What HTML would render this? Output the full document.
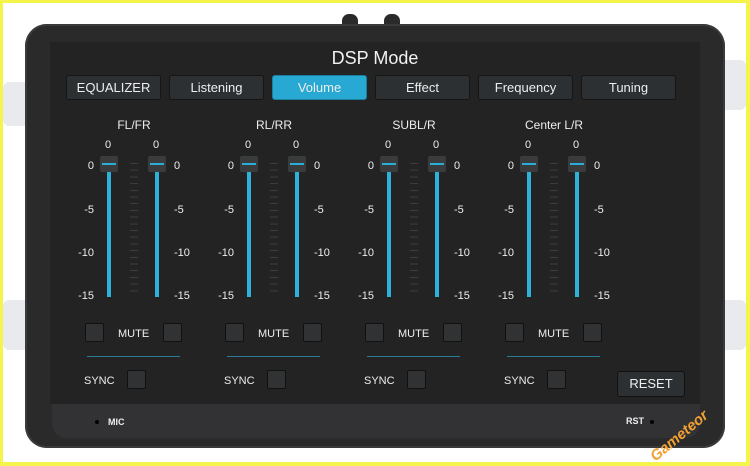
<!DOCTYPE html>
<html><head><style>
*{margin:0;padding:0;box-sizing:border-box}
body{width:750px;height:466px;background:#f4f44a;position:relative;overflow:hidden;font-family:"Liberation Sans",sans-serif;color:#eee}
.a{position:absolute}
.frame{left:3px;top:3px;width:743px;height:459px;background:#fff}
.dev{left:25px;top:24px;width:700px;height:424px;background:#2a2a2b;border-radius:22px;box-shadow:inset 0 0 0 2px #3a3a3c}
.scr{left:50px;top:42px;width:650px;height:362px;background:#232323}
.bez{left:52px;top:404px;width:648px;height:34px;background:#323234;border-radius:0 0 14px 14px}
.brk{background:#e8eaee;border-radius:6px}
.tab{top:75px;width:95px;height:25px;background:#2c3032;border:1px solid #151515;border-radius:3px;font-size:13px;text-align:center;line-height:23px;color:#eee}
.g{top:0;width:140px;height:466px}
.t{font-size:12px;text-align:center;width:100px;left:24px}
.n{font-size:11px}
.knob{width:18px;height:16px;background:#3a3b3c;border-radius:2px}
.knob:after{content:"";position:absolute;left:2px;right:2px;top:7px;height:2px;background:#2aaed6}
.trk{width:4px;background:#2eb2da}
.box{width:19px;height:19px;background:#303234;border:1px solid #111;border-radius:2px}
</style></head><body>
<div class="a frame"></div>
<div class="a brk" style="left:3px;top:82px;width:30px;height:44px"></div>
<div class="a brk" style="left:3px;top:300px;width:30px;height:50px"></div>
<div class="a brk" style="left:718px;top:60px;width:28px;height:50px"></div>
<div class="a brk" style="left:718px;top:300px;width:28px;height:50px"></div>
<div class="a" style="left:342px;top:14px;width:16px;height:14px;background:#2a2a2b;border-radius:7px 7px 0 0"></div>
<div class="a" style="left:384px;top:14px;width:16px;height:14px;background:#2a2a2b;border-radius:7px 7px 0 0"></div>
<div class="a dev"></div>
<div class="a scr"></div>
<div class="a bez"></div>
<div class="a" style="left:95px;top:420px;width:4px;height:4px;border-radius:2px;background:#000"></div>
<div class="a" style="left:108px;top:417px;font-size:9px;font-weight:bold">MIC</div>
<div class="a" style="left:626px;top:416px;font-size:9px;font-weight:bold">RST</div>
<div class="a" style="left:650px;top:420px;width:4px;height:4px;border-radius:2px;background:#000"></div>
<div class="a" style="left:658px;top:448px;font-size:15px;font-style:italic;font-weight:bold;color:#f0a030;transform:rotate(-40deg);transform-origin:left bottom">Gameteor</div>
<div class="a" style="left:0;width:750px;top:48px;text-align:center;font-size:18px;color:#f2f2f2">DSP Mode</div>
<div class="a tab" style="left:66px">EQUALIZER</div>
<div class="a tab" style="left:169px">Listening</div>
<div class="a tab" style="left:272px;background:#27a9d4;border-color:#1b7fa0">Volume</div>
<div class="a tab" style="left:375px">Effect</div>
<div class="a tab" style="left:478px">Frequency</div>
<div class="a tab" style="left:581px">Tuning</div>

<div class="a g" style="left:60px">
<div class="a t" style="top:118px">FL/FR</div>
<div class="a n" style="left:45px;top:139px">0</div><div class="a n" style="left:93px;top:139px">0</div>
<div class="a knob" style="left:40px;top:156px"></div><div class="a knob" style="left:88px;top:156px"></div>
<div class="a trk" style="left:47px;top:172px;height:125px"></div><div class="a trk" style="left:95px;top:172px;height:125px"></div>
<div class="a" style="left:70px;top:163px;width:8px;height:134px;background:repeating-linear-gradient(#3d3d3d 0 1px,transparent 1px 6.7px)"></div>
<div class="a n" style="left:0;width:34px;text-align:right;top:160px">0</div>
<div class="a n" style="left:0;width:34px;text-align:right;top:204px">-5</div>
<div class="a n" style="left:0;width:34px;text-align:right;top:247px">-10</div>
<div class="a n" style="left:0;width:34px;text-align:right;top:290px">-15</div>
<div class="a n" style="left:114px;top:160px">0</div><div class="a n" style="left:114px;top:204px">-5</div><div class="a n" style="left:114px;top:247px">-10</div><div class="a n" style="left:114px;top:290px">-15</div>
<div class="a box" style="left:25px;top:323px"></div><div class="a box" style="left:103px;top:323px"></div>
<div class="a n" style="left:58px;top:328px">MUTE</div>
<div class="a" style="left:27px;top:356px;width:93px;height:1px;background:#2a7c96"></div>
<div class="a n" style="left:24px;top:375px">SYNC</div>
<div class="a box" style="left:67px;top:370px"></div>
</div>

<div class="a g" style="left:200px">
<div class="a t" style="top:118px">RL/RR</div>
<div class="a n" style="left:45px;top:139px">0</div><div class="a n" style="left:93px;top:139px">0</div>
<div class="a knob" style="left:40px;top:156px"></div><div class="a knob" style="left:88px;top:156px"></div>
<div class="a trk" style="left:47px;top:172px;height:125px"></div><div class="a trk" style="left:95px;top:172px;height:125px"></div>
<div class="a" style="left:70px;top:163px;width:8px;height:134px;background:repeating-linear-gradient(#3d3d3d 0 1px,transparent 1px 6.7px)"></div>
<div class="a n" style="left:0;width:34px;text-align:right;top:160px">0</div>
<div class="a n" style="left:0;width:34px;text-align:right;top:204px">-5</div>
<div class="a n" style="left:0;width:34px;text-align:right;top:247px">-10</div>
<div class="a n" style="left:0;width:34px;text-align:right;top:290px">-15</div>
<div class="a n" style="left:114px;top:160px">0</div><div class="a n" style="left:114px;top:204px">-5</div><div class="a n" style="left:114px;top:247px">-10</div><div class="a n" style="left:114px;top:290px">-15</div>
<div class="a box" style="left:25px;top:323px"></div><div class="a box" style="left:103px;top:323px"></div>
<div class="a n" style="left:58px;top:328px">MUTE</div>
<div class="a" style="left:27px;top:356px;width:93px;height:1px;background:#2a7c96"></div>
<div class="a n" style="left:24px;top:375px">SYNC</div>
<div class="a box" style="left:67px;top:370px"></div>
</div>

<div class="a g" style="left:340px">
<div class="a t" style="top:118px">SUBL/R</div>
<div class="a n" style="left:45px;top:139px">0</div><div class="a n" style="left:93px;top:139px">0</div>
<div class="a knob" style="left:40px;top:156px"></div><div class="a knob" style="left:88px;top:156px"></div>
<div class="a trk" style="left:47px;top:172px;height:125px"></div><div class="a trk" style="left:95px;top:172px;height:125px"></div>
<div class="a" style="left:70px;top:163px;width:8px;height:134px;background:repeating-linear-gradient(#3d3d3d 0 1px,transparent 1px 6.7px)"></div>
<div class="a n" style="left:0;width:34px;text-align:right;top:160px">0</div>
<div class="a n" style="left:0;width:34px;text-align:right;top:204px">-5</div>
<div class="a n" style="left:0;width:34px;text-align:right;top:247px">-10</div>
<div class="a n" style="left:0;width:34px;text-align:right;top:290px">-15</div>
<div class="a n" style="left:114px;top:160px">0</div><div class="a n" style="left:114px;top:204px">-5</div><div class="a n" style="left:114px;top:247px">-10</div><div class="a n" style="left:114px;top:290px">-15</div>
<div class="a box" style="left:25px;top:323px"></div><div class="a box" style="left:103px;top:323px"></div>
<div class="a n" style="left:58px;top:328px">MUTE</div>
<div class="a" style="left:27px;top:356px;width:93px;height:1px;background:#2a7c96"></div>
<div class="a n" style="left:24px;top:375px">SYNC</div>
<div class="a box" style="left:67px;top:370px"></div>
</div>

<div class="a g" style="left:480px">
<div class="a t" style="top:118px">Center L/R</div>
<div class="a n" style="left:45px;top:139px">0</div><div class="a n" style="left:93px;top:139px">0</div>
<div class="a knob" style="left:40px;top:156px"></div><div class="a knob" style="left:88px;top:156px"></div>
<div class="a trk" style="left:47px;top:172px;height:125px"></div><div class="a trk" style="left:95px;top:172px;height:125px"></div>
<div class="a" style="left:70px;top:163px;width:8px;height:134px;background:repeating-linear-gradient(#3d3d3d 0 1px,transparent 1px 6.7px)"></div>
<div class="a n" style="left:0;width:34px;text-align:right;top:160px">0</div>
<div class="a n" style="left:0;width:34px;text-align:right;top:204px">-5</div>
<div class="a n" style="left:0;width:34px;text-align:right;top:247px">-10</div>
<div class="a n" style="left:0;width:34px;text-align:right;top:290px">-15</div>
<div class="a n" style="left:114px;top:160px">0</div><div class="a n" style="left:114px;top:204px">-5</div><div class="a n" style="left:114px;top:247px">-10</div><div class="a n" style="left:114px;top:290px">-15</div>
<div class="a box" style="left:25px;top:323px"></div><div class="a box" style="left:103px;top:323px"></div>
<div class="a n" style="left:58px;top:328px">MUTE</div>
<div class="a" style="left:27px;top:356px;width:93px;height:1px;background:#2a7c96"></div>
<div class="a n" style="left:24px;top:375px">SYNC</div>
<div class="a box" style="left:67px;top:370px"></div>
</div>

<div class="a" style="left:617px;top:371px;width:68px;height:26px;background:#2c3032;border:1px solid #111;border-radius:3px;font-size:13px;text-align:center;line-height:24px">RESET</div>
</body></html>
